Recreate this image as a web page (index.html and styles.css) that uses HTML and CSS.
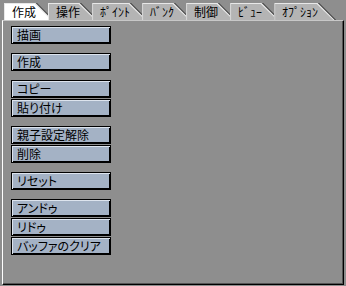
FILE: index.html
```html
<!DOCTYPE html>
<html lang="ja">
<head>
<meta charset="utf-8">
<link rel="stylesheet" href="styles.css">
</head>
<body>
<div class="win">
  <div class="tabs">
    <div class="tab active"><span>作成</span></div>
    <div class="tab"><span>操作</span></div>
    <div class="tab"><span>ﾎﾟｲﾝﾄ</span></div>
    <div class="tab"><span>ﾊﾞﾝｸ</span></div>
    <div class="tab"><span>制御</span></div>
    <div class="tab"><span>ﾋﾞｭｰ</span></div>
    <div class="tab"><span>ｵﾌﾟｼｮﾝ</span></div>
  </div>
  <div class="panel">
    <div class="group"><div class="btn">描画</div></div>
    <div class="group"><div class="btn">作成</div></div>
    <div class="group"><div class="btn">コピー</div><div class="btn">貼り付け</div></div>
    <div class="group"><div class="btn">親子設定解除</div><div class="btn">削除</div></div>
    <div class="group"><div class="btn">リセット</div></div>
    <div class="group"><div class="btn">アンドゥ</div><div class="btn">リドゥ</div><div class="btn">バッファのクリア</div></div>
  </div>
</div>
</body>
</html>
```
FILE: styles.css
```css
html, body {
  margin: 0;
  padding: 0;
}
body {
  width: 346px;
  height: 286px;
  overflow: hidden;
  background: #8e8e8e;
  font-family: "Noto Sans CJK JP", sans-serif;
  font-size: 12px;
  color: #000;
}
.win {
  box-sizing: border-box;
  height: 286px;
  padding: 3px 2px 1px 2px;
  display: flex;
  flex-direction: column;
}
.tabs {
  display: flex;
  height: 17px;
  padding-left: 2px;
}
.tab {
  position: relative;
  z-index: 0;
  height: 17px;
  box-sizing: border-box;
  padding: 1px 18px 0 8px;
  margin-right: -6px;
  display: flex;
  align-items: center;
  line-height: 1;
  background: #3c3c3c;
  clip-path: polygon(0 0, calc(100% - 17px) 0, 100% 100%, 0 100%);
}
.tab::before {
  content: "";
  position: absolute;
  inset: 0;
  background: #e8e8e8;
  clip-path: polygon(0 0, calc(100% - 18.4px) 0, calc(100% - 1.4px) 100%, 0 100%);
}
.tab::after {
  content: "";
  position: absolute;
  inset: 1px 0 0 1px;
  background: #b4b4b4;
  clip-path: polygon(0 0, calc(100% - 19.4px) 0, calc(100% - 2.8px) 100%, 0 100%);
}
.tab.active::after {
  background: #ffffff;
}
.tab span {
  position: relative;
  z-index: 1;
}
.panel {
  flex: 1;
  border-top: 1px solid #c8c8c8;
  border-left: 1px solid #ffffff;
  border-right: 1px solid #000;
  border-bottom: 1px solid #000;
  box-shadow: inset -1px -1px #555;
  padding: 5px 0 0 8px;
  display: flex;
  flex-direction: column;
  gap: 9px;
}
.group {
  display: flex;
  flex-direction: column;
  gap: 1px;
}
.btn {
  width: 100px;
  height: 18px;
  box-sizing: border-box;
  border: 1px solid #000;
  background: #a4b2c5;
  box-shadow: inset 1px 1px #dde4ee, inset -1px -1px #000;
  padding-left: 5px;
  line-height: 16px;
  font-feature-settings: "palt" 1;
  white-space: nowrap;
}
```
